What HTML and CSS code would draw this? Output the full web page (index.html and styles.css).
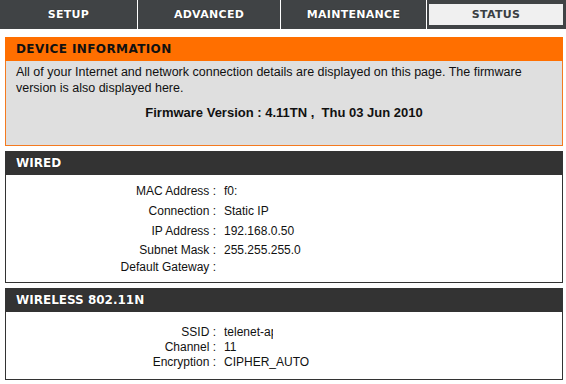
FILE: index.html
```html
<!DOCTYPE html>
<html lang="en">

<head>
    <meta charset="UTF-8">
    <meta name="viewport" content="width=device-width, initial-scale=1.0">
    <title>Status</title>
    <link rel="stylesheet" href="styles.css">
</head>

<body>
    <div class="topnav">
        <div class="tab tab-setup">SETUP</div>
        <div class="tab tab-advanced">ADVANCED</div>
        <div class="tab tab-maint">MAINTENANCE</div>
        <div class="tab tab-status active"><span>STATUS</span></div>
    </div>

    <div class="content">
        <div class="box box-info">
            <h2 class="box-title">DEVICE INFORMATION</h2>
            <div class="box-body">
                <p class="intro">All of your Internet and network connection details are displayed on this page. The firmware version is also displayed here.</p>
                <p class="firmware">Firmware Version : 4.11TN ,&nbsp; Thu 03 Jun 2010</p>
            </div>
        </div>

        <div class="box box-section wired">
            <h2 class="box-title">WIRED</h2>
            <div class="box-body">
                <div class="row"><span class="label">MAC Address :</span><span class="value">f0:</span></div>
                <div class="row"><span class="label">Connection :</span><span class="value">Static IP</span></div>
                <div class="row"><span class="label">IP Address :</span><span class="value">192.168.0.50</span></div>
                <div class="row tight"><span class="label">Subnet Mask :</span><span class="value">255.255.255.0</span></div>
                <div class="row tight"><span class="label">Default Gateway :</span><span class="value"></span></div>
            </div>
        </div>

        <div class="box box-section wireless">
            <h2 class="box-title">WIRELESS 802.11N</h2>
            <div class="box-body">
                <div class="row"><span class="label">SSID :</span><span class="value"><span class="clip">telenet-ap</span></span></div>
                <div class="row"><span class="label">Channel :</span><span class="value">11</span></div>
                <div class="row"><span class="label">Encryption :</span><span class="value">CIPHER_AUTO</span></div>
            </div>
        </div>
    </div>
</body>

</html>
```

FILE: styles.css
```css
body {
    margin: 0;
    background: #fff;
    font-family: "Liberation Sans", Arial, sans-serif;
    font-size: 12px;
    color: #111;
}

/* top navigation tabs */
.topnav {
    display: flex;
    gap: 1px;
    height: 29px;
}

.tab {
    background-color: #404345;
    color: #fff;
    font-family: "DejaVu Sans", Verdana, sans-serif;
    font-weight: bold;
    font-size: 11px;
    letter-spacing: 0.3px;
    text-shadow: 0 0 1px rgba(0, 0, 0, 0.6);
    display: flex;
    align-items: center;
    justify-content: center;
}

.tab-setup { width: 137px; }
.tab-advanced { width: 142px; }
.tab-maint { width: 145px; }

.tab-status {
    flex: 1;
    padding: 4px 3px 4px 2px;
}

.tab-status span {
    flex: 1;
    align-self: stretch;
    display: flex;
    align-items: center;
    justify-content: center;
    background-color: #f0f0f0;
    color: #3a3e42;
    text-shadow: none;
}

.content {
    width: 558px;
    margin: 8px 0 0 5px;
}

.box {
    margin-bottom: 5px;
}

.box-title {
    margin: 0;
    height: 24px;
    line-height: 24px;
    padding-left: 11px;
    font-family: "DejaVu Sans", Verdana, sans-serif;
    font-weight: bold;
    font-size: 12px;
    letter-spacing: 0.4px;
}

/* orange information box */
.box-info .box-title {
    background-color: #ff6f00;
    color: #111;
}

.box-info .box-body {
    background-color: #dfdfdf;
    border: 1px solid #f47a20;
    border-top: none;
    height: 81px;
    padding: 3px 10px 0 10px;
}

.intro {
    margin: 0;
    line-height: 16px;
    font-size: 12.5px;
}

.firmware {
    margin: 9px 0 0;
    text-align: center;
    font-weight: bold;
    font-size: 13px;
}

/* dark section boxes */
.box-section .box-title {
    background-color: #333;
    color: #fff;
    letter-spacing: 0;
    text-shadow: 0 0 1px rgba(0, 0, 0, 0.8);
}

.box-section .box-body {
    background-color: #fff;
    border: 1px solid #333;
    border-top: none;
}

.wired .box-body {
    padding: 6px 0 7px;
}

.wireless .box-body {
    padding: 12px 0 10px;
}

.row {
    display: flex;
    height: 20px;
    align-items: center;
}

.row.tight {
    height: 17px;
}

.wireless .row {
    height: 15px;
}

.label {
    width: 210px;
    text-align: right;
    white-space: nowrap;
}

.value {
    padding-left: 8px;
}

.clip {
    display: inline-block;
    width: 49px;
    overflow: hidden;
    white-space: nowrap;
    vertical-align: bottom;
}
```
